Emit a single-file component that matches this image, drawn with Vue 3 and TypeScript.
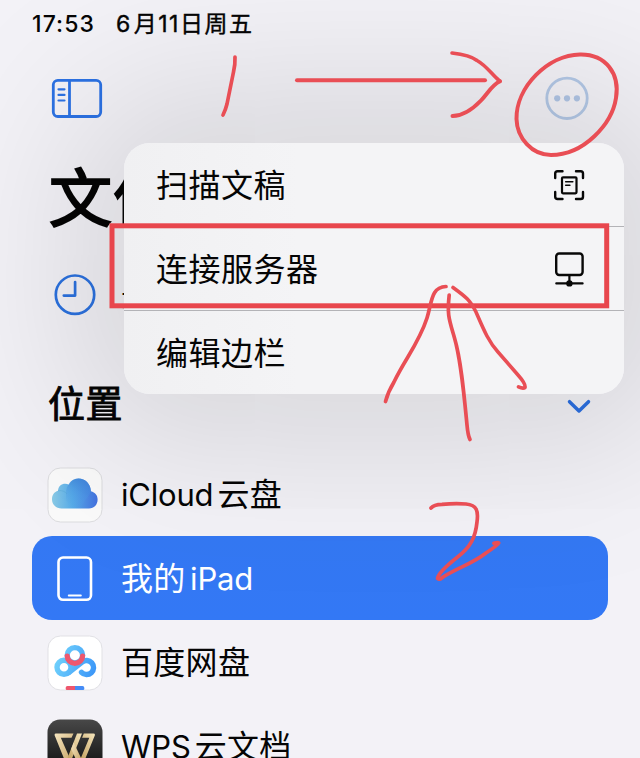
<script setup lang="ts">
interface Place {
  id: string
  latinFirst?: string
  cjk: string
  latinLast?: string
  selected?: boolean
}

const places: Place[] = [
  { id: 'icloud', latinFirst: 'iCloud', cjk: '云盘' },
  { id: 'ipad', cjk: '我的', latinLast: 'iPad', selected: true },
  { id: 'baidu', cjk: '百度网盘' },
  { id: 'wps', latinFirst: 'WPS', cjk: '云文档' },
]

const actions: { id: string; label: string }[] = [
  { id: 'scan', label: '扫描文稿' },
  { id: 'server', label: '连接服务器' },
  { id: 'edit', label: '编辑边栏' },
]
</script>

<template>
  <div class="screen">
    <header class="status">
      <span class="time">17:53</span>
      <span class="date"><span class="six">6</span>月<span class="eleven">11</span>日周五</span>
    </header>

    <nav class="toolbar">
      <svg class="sidebar-icon" width="52" height="42" viewBox="0 0 52 42" fill="none" stroke="#2c72e4">
        <rect x="2.3" y="3.300" width="47.4" height="36.2" rx="4.5" stroke-width="2.8" />
        <path d="M18.500 3.500V39" stroke-width="2.8" />
        <path d="M7.500 12.300h6M7.500 17.900h6M7.500 23.500h6" stroke-width="2.200" stroke-linecap="round" />
      </svg>
      <svg class="more-icon" width="44" height="44" viewBox="0 0 44 44" fill="none">
        <circle cx="22" cy="22.300" r="20.200" stroke="#b3c8e6" stroke-width="2.800" />
        <g fill="#b0c5e5"><circle cx="12.200" cy="22.300" r="3.100" /><circle cx="22" cy="22.300" r="3.100" /><circle cx="31.900" cy="22.300" r="3.100" /></g>
      </svg>
    </nav>

    <h1 class="title">文件</h1>

    <div class="row recents">
      <span class="icon">
        <svg width="42" height="42" viewBox="0 0 42 42" fill="none" stroke="#2c72e0">
          <circle cx="21" cy="20.700" r="19.200" stroke-width="2.700" />
          <path d="M21.100 8v13.600H9.800" stroke-width="2.700" stroke-linecap="round" stroke-linejoin="round" />
        </svg>
      </span>
      <span class="label">最近</span>
    </div>

    <div class="section">
      <h2>位置</h2>
      <svg width="24" height="16" viewBox="0 0 24 16" fill="none">
        <path d="M2.500 3.700 12 13l9.500-9.300" stroke="#2c70e2" stroke-width="3.500" stroke-linecap="round" stroke-linejoin="round" />
      </svg>
    </div>

    <div v-for="p in places" :key="p.id" class="row" :class="[p.id, { selected: p.selected }]">
      <span class="icon">
        <svg v-if="p.id === 'icloud'" width="56" height="56" viewBox="0 0 56 56">
          <defs>
            <linearGradient id="cloudFill" x1="5" y1="34" x2="51" y2="34" gradientUnits="userSpaceOnUse">
              <stop offset="0" stop-color="#8bcbe6" /><stop offset=".45" stop-color="#57ace9" /><stop offset="1" stop-color="#4370df" />
            </linearGradient>
            <linearGradient id="cloudTop" x1="35" y1="12" x2="28" y2="42" gradientUnits="userSpaceOnUse">
              <stop offset="0" stop-color="#3f83d8" /><stop offset="1" stop-color="#54aaf0" stop-opacity="0" />
            </linearGradient>
          </defs>
          <rect x="1" y="1" width="54" height="54" rx="12.500" fill="#fafafa" stroke="#dcdcdf" />
          <path d="M14.500 41.500C9 41.500 5 37.500 5 32.300c0-4.200 2.300-7.500 6-8.500.3-4.500 3.400-7 7.200-7 1.500 0 2.700.3 3.600.9C24 13.500 27.500 11.500 31.500 11.500c6.800 0 12 5.200 12.500 12.800 4.100 1 6.600 4.200 6.600 8.200 0 5.200-3.600 9-8.600 9Z" fill="url(#cloudFill)" />
          <path d="M19 27c0-9 5-15.500 12.500-15.500 6.800 0 12 5.200 12.500 12.800-2 4-4.500 8-7 10.500l-3 6.700H23C20 38 18.500 33 19 27Z" fill="url(#cloudTop)" opacity=".75" />
          <path d="M11 23.800c3.500-.7 7 .5 9 3" fill="none" stroke="#4ca1ce" stroke-opacity=".35" />
        </svg>
        <svg v-else-if="p.id === 'ipad'" width="36" height="46" viewBox="0 0 36 46" fill="none" stroke="#fff">
          <rect x="1.500" y="1.500" width="32.500" height="42.300" rx="4.500" stroke-width="2.600" />
          <path d="M11.700 39.500h12.200" stroke-width="1.800" stroke-linecap="round" />
        </svg>
        <svg v-else-if="p.id === 'baidu'" width="56" height="56" viewBox="0 0 56 56" fill="none">
          <defs>
            <linearGradient id="panBlue" x1="6" y1="20" x2="49" y2="36" gradientUnits="userSpaceOnUse">
              <stop offset="0" stop-color="#74d6fc" /><stop offset="1" stop-color="#3b96f8" />
            </linearGradient>
          </defs>
          <rect x="1" y="1" width="54" height="54" rx="12.500" fill="#fff" stroke="#e1e1e5" />
          <g stroke="url(#panBlue)" stroke-width="5.400" stroke-linecap="round">
            <circle cx="17" cy="32.300" r="7" />
            <path d="M34.500 37.300A7 7 0 1 0 35 27.200L22 37.500" />
            <circle cx="27.900" cy="20.300" r="7.700" />
          </g>
          <path d="M20.200 21a7.700 7.300 0 0 0 15.400 0" stroke="#ee576e" stroke-width="5.200" stroke-linecap="round" />
          <path d="M28 51h-7.500a1.800 1.800 0 0 0-1.800 1.800v1q0 1.200 1.200 1.200H28Z" fill="#ee566d" />
          <path d="M28 51h7.500a1.800 1.800 0 0 1 1.800 1.800v1q0 1.200-1.200 1.200H28Z" fill="#458cf6" />
        </svg>
        <svg v-else width="56" height="56" viewBox="0 0 56 56">
          <defs>
            <linearGradient id="wpsDark" x1="0" y1="0" x2="0" y2="1">
              <stop offset="0" stop-color="#484848" /><stop offset=".8" stop-color="#171717" /><stop offset="1" stop-color="#111" />
            </linearGradient>
            <linearGradient id="wpsGold" x1="0" y1="0" x2="1" y2="1">
              <stop offset="0" stop-color="#f6e6c0" /><stop offset="1" stop-color="#c5a163" />
            </linearGradient>
            <linearGradient id="wpsGoldUp" x1="0" y1="1" x2="1" y2="0">
              <stop offset="0" stop-color="#bd9854" /><stop offset="1" stop-color="#f6e6bd" />
            </linearGradient>
          </defs>
          <rect x=".5" y=".5" width="55" height="55" rx="12.500" fill="url(#wpsDark)" />
          <path d="M9 14.500h17.500l-2 4.300H13.800L22.300 38 19.800 44H18.800L7.800 16.800Q7 14.500 9 14.500Z" fill="url(#wpsGold)" />
          <path d="M30 14.500h5L23.200 44h-4.600Z" fill="url(#wpsGoldUp)" />
          <path d="M26.700 23.500 34.500 40 33 44h-2.500L24.200 30Z" fill="url(#wpsGold)" />
          <path d="M36.800 14.500h9.700q2 0 1.200 2.300L36.500 44h-4.700L42.300 18.800h-7.200Z" fill="url(#wpsGoldUp)" />
        </svg>
      </span>
      <span class="label">
        <span v-if="p.latinFirst" class="latin first">{{ p.latinFirst }}</span><span>{{ p.cjk }}</span><span v-if="p.latinLast" class="latin last">{{ p.latinLast }}</span>
      </span>
    </div>

    <div class="menu">
      <div v-for="a in actions" :key="a.id" class="action">
        <span class="action-label">{{ a.label }}</span>
        <svg v-if="a.id === 'scan'" width="32" height="32" viewBox="0 0 32 32" fill="none" stroke="#080808" stroke-linecap="round" stroke-linejoin="round">
          <path d="M2.200 9V4.500Q2.200 2.200 4.500 2.200H9.500M23 2.200h4.700q2.300 0 2.300 2.300V9M30 23v4.700q0 2.300-2.300 2.300H23M9.500 30H4.500q-2.300 0-2.300-2.300V23" stroke-width="2.400" />
          <rect x="9" y="8.300" width="14.500" height="16" rx="1" stroke-width="2.200" />
          <path d="M12.700 12.800h7.100M12.700 16.300h4.200" stroke-width="1.600" />
        </svg>
        <svg v-else-if="a.id === 'server'" width="32" height="38" viewBox="0 0 32 38" fill="none" stroke="#080808" stroke-linecap="round">
          <rect x="3.200" y="3.500" width="26.400" height="21.500" rx="3" stroke-width="2.400" />
          <path d="M16.400 25v8M3.300 33.400h26.300" stroke-width="2.200" />
          <circle cx="16.400" cy="33.400" r="2.400" fill="#080808" stroke-width="1.600" />
        </svg>
      </div>
    </div>

    <svg class="marks" width="640" height="758" viewBox="0 0 640 758" fill="none" stroke="#e94e55" stroke-linecap="round" stroke-linejoin="round">
      <path d="M235 57Q235.300 65 233.500 72L227 104Q225.500 110 223 115" stroke-width="3.700" />
      <path d="M297 80.300H485" stroke-width="4" />
      <path d="M452 53Q470 55 477 60.500C487 66 492 75 500 81.300" stroke-width="3.600" />
      <path d="M500 81.300C492 85 488 93 481 100.500Q466 116 452.500 116" stroke-width="4" />
      <path d="M580 54.500C606 54 620 74 616 98C612 124 584 155 551 155C532 155 517 138 516.500 119C516 87 548 55 580 54.500Z" stroke-width="4" />
      <rect x="112" y="225.800" width="494.700" height="80" stroke="#e8464d" stroke-width="5" stroke-linejoin="miter" />
      <path d="M446 286.500C431 287 432 302 427 318C419 343 405 359 394 382Q388 392 385.500 401.500" stroke-width="3.700" />
      <path d="M449.200 295C447 315 449 319 454.500 338C461 360 464 394 467 425Q468 436 470 439.500" stroke-width="3.700" />
      <path d="M453 287.500C466 297 470 300 476 312C483 328 488 341 498 352L518 375Q526 384 525 387.500 523 389 518.500 386.800" stroke-width="3.600" />
      <path d="M431 508Q434 504.500 442 504.300Q455 503.300 466 504C477 505 478.500 511 477 522C475.500 537 471 547 457 557.500C445 567 438 574 437.500 578.500Q439 580.500 443 577C459 567 472 564 486 553Q498 545 498.700 543Q498 541.800 494 543.300" stroke-width="3.700" />
    </svg>
  </div>
</template>

<style>
body { margin: 0; background: #f2f1f6; }
</style>

<style scoped>
.screen {
  position: relative;
  box-sizing: border-box;
  width: 640px;
  height: 758px;
  overflow: hidden;
  padding: 0 32px;
  display: flex;
  flex-direction: column;
  background: #f3f2f7;
  color: #050505;
  font-family: Inter, "Noto Sans CJK SC", sans-serif;
}
.screen > * { flex-shrink: 0; }
.status { height: 48px; padding-bottom: 2px; box-sizing: border-box; display: flex; align-items: center; font-size: 23px; font-weight: 500; }
.time { width: 84px; letter-spacing: 1.1px; padding-top: 1px; }
.date { white-space: nowrap; letter-spacing: 1.500px; font-weight: 400; -webkit-text-stroke: .4px currentColor; padding-bottom: 2px; }
.six { margin-right: 2px; }
.toolbar { height: 102px; padding: 0 19px 2px 19px; display: flex; align-items: center; justify-content: space-between; box-sizing: border-box; }
.title { margin: 0; padding-left: 17px; height: 103px; line-height: 96px; font-size: 63px; letter-spacing: 1px; font-weight: 400; -webkit-text-stroke: 2px currentColor; }
.row { height: 84px; display: flex; align-items: center; border-radius: 20px; box-sizing: border-box; padding-left: 14.500px; }
.icon { width: 56px; height: 56px; margin-top: 1px; display: flex; align-items: center; justify-content: center; }
.recents .icon { margin-top: 0; }
.label { margin-left: 18.500px; font-size: 32px; line-height: 48px; white-space: nowrap; letter-spacing: .3px; padding-top: 1px; }
.latin { font-size: 31px; letter-spacing: -.2px; }
.first { margin-right: 4px; }
.last { margin-left: 4.500px; }
.section { height: 115px; padding: 22px 17px 0 16px; box-sizing: border-box; display: flex; align-items: center; justify-content: space-between; }
.section h2 { margin: 0; font-size: 37px; line-height: 54px; padding-bottom: 1px; letter-spacing: .5px; font-weight: 400; -webkit-text-stroke: .9px currentColor; }
.selected { color: #fff; background: linear-gradient(#3478f3, #3378f5); }
.menu {
  position: absolute;
  left: 124px;
  top: 143px;
  width: 500px;
  height: 251px;
  border-radius: 26px;
  background: linear-gradient(90deg, #f0f0f2, #f4f4f6 35%);
  box-shadow: 0 0 170px 44px rgba(0, 0, 0, .135);
}
.action { height: 84px; box-sizing: border-box; padding: 0 39px 0 32px; display: flex; align-items: center; justify-content: space-between; font-size: 32px; }
.action:first-child { height: 83px; }
.action + .action { border-top: 1px solid #b3b3b7; }
.action-label { padding-bottom: 4px; letter-spacing: .5px; }
.marks { position: absolute; inset: 0; }
</style>
